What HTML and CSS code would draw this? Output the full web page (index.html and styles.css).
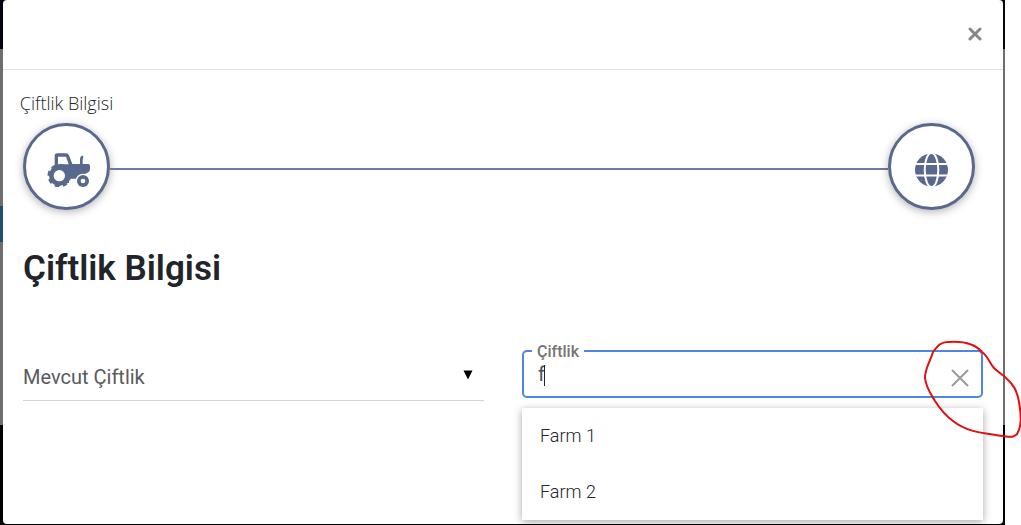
FILE: index.html
```html
<!DOCTYPE html>
<html lang="tr">
<head>
    <meta charset="UTF-8">
    <meta name="viewport" content="width=device-width, initial-scale=1.0">
    <title>Çiftlik Bilgisi</title>
    <link rel="stylesheet" href="styles.css">
</head>
<body>
    <div class="backdrop">
        <div class="modal" role="dialog" aria-labelledby="modalTitle">
            <div class="modal-header">
                <button type="button" class="close-btn" aria-label="Kapat">
                    <svg width="14" height="14" viewBox="0 0 14 14">
                        <path d="M2 2L12 12M12 2L2 12" />
                    </svg>
                </button>
            </div>

            <div class="modal-body">
                <div class="stepper">
                    <div class="step">
                        <span class="step-label">Çiftlik Bilgisi</span>
                        <button type="button" class="step-circle" aria-label="Çiftlik Bilgisi">
                            <!-- tractor -->
                            <svg width="50" height="35" viewBox="-15 0 150 105">
                                <path fill-rule="evenodd" d="M23 36V11Q23 4 31 4H57Q63 4 66 10L76 36H99V21Q99 13 105 11Q109 10 109 16L107 23V36H124Q129 36 129 42V51Q129 58 124 61Q117 66 111 67Q95 69 88 80H66V93H10V58L16 48H23ZM33 37H65L57 14H33Z" />
                                <circle cx="37" cy="71" r="31" />
                                <circle class="tread" cx="37" cy="71" r="32" />
                                <circle class="hole" cx="37" cy="71" r="17" />
                                <circle class="hole" cx="108" cy="87" r="22" />
                                <circle cx="108" cy="87" r="18" />
                                <circle class="hole" cx="108" cy="87" r="7" />
                            </svg>
                        </button>
                    </div>
                    <div class="step-line"></div>
                    <div class="step">
                        <button type="button" class="step-circle" aria-label="Konum">
                            <!-- globe -->
                            <svg width="34" height="34" viewBox="0 0 34 34">
                                <circle cx="16.5" cy="17" r="16.5" />
                                <path class="grid-line" d="M0 11H34M0 22.5H34" />
                                <ellipse class="grid-line" cx="16.5" cy="17" rx="6.8" ry="17" />
                            </svg>
                        </button>
                    </div>
                </div>

                <h1 id="modalTitle">Çiftlik Bilgisi</h1>

                <form class="form-row">
                    <div class="select-field">
                        <select class="select" aria-label="Mevcut Çiftlik">
                            <option>Mevcut Çiftlik</option>
                        </select>
                        <svg class="select-arrow" width="10" height="10" viewBox="0 0 10 10">
                            <path d="M0.5 0.5H9.5L5 9.5Z" />
                        </svg>
                    </div>

                    <div class="autocomplete">
                        <div class="text-field">
                            <label for="farm">Çiftlik</label>
                            <input type="text" id="farm" value="f" autocomplete="off">
                            <span class="caret"></span>
                            <button type="button" class="clear-btn" aria-label="Temizle">
                                <svg width="18" height="18" viewBox="0 0 18 18">
                                    <path d="M1 1L17 17M17 1L1 17" />
                                </svg>
                            </button>
                        </div>
                        <ul class="options">
                            <li>Farm 1</li>
                            <li>Farm 2</li>
                        </ul>
                    </div>
                </form>
            </div>
        </div>
    </div>

    <!-- hand-drawn marker around the clear button -->
    <svg class="marker" width="100" height="102" viewBox="0 0 100 102">
        <path d="M28 4C20 3 16 9 12 14C9 24 4 30 4 40C5 50 10 56 14 63C19 71 24 77 32 83C47 95 65 95 82 98C90 99 95 100 97 94C101 87 100 75 98 64C96 52 92 46 84 39C79 35 76 33 73 30C69 26 67 18 61 14C55 7 43 3 28 4" />
    </svg>
</body>
</html>
```

FILE: styles.css
```css
* {
    box-sizing: border-box;
}

body {
    margin: 0;
    background: #fff;
    color: #212529;
    font-family: Roboto, "Liberation Sans", sans-serif;
}

button {
    padding: 0;
    border: none;
    background: none;
    cursor: pointer;
}

.backdrop {
    display: flex;
    min-height: 100vh;
    margin-right: 16px;
    padding: 0 2px 1px 3px;
    background:
        linear-gradient(#1d4f70, #1d4f70) 0 206px / 3px 36px no-repeat,
        linear-gradient(#05050d 49px, #6e6e6e 49px, #6e6e6e 425px, #000 425px);
}

.modal {
    flex: 1;
    background: #fff;
    border-radius: 4px;
}

.modal-header {
    display: flex;
    justify-content: flex-end;
    align-items: center;
    height: 70px;
    padding: 0 21px 2px;
    border-bottom: 1px solid #dee2e6;
}

.close-btn {
    display: flex;
}

.close-btn path {
    stroke: #888;
    stroke-width: 3;
    stroke-linecap: round;
}

.modal-body {
    padding: 20px 20px 4px;
}

/* Stepper */
.stepper {
    display: flex;
    align-items: flex-end;
    margin-right: 8px;
}

.step {
    display: flex;
    flex-direction: column;
    align-items: center;
    width: 87px;
}

.step-label {
    margin-bottom: 6px;
    color: #212529;
    font-family: "Open Sans", "Noto Sans", sans-serif;
    font-size: 18px;
    font-weight: 300;
    line-height: 27px;
    white-space: nowrap;
}

.step-circle {
    display: flex;
    justify-content: center;
    align-items: center;
    width: 87px;
    height: 87px;
    padding-top: 6px;
    border: 3px solid #59698d;
    border-radius: 50%;
    background: #fff;
    box-shadow: 0 2px 8px rgba(0, 0, 0, 0.3);
}

.step-circle svg {
    fill: #59698d;
}

.step-circle .tread {
    fill: none;
    stroke: #59698d;
    stroke-width: 7;
    stroke-dasharray: 14 11;
}

.step-circle .hole {
    fill: #fff;
}

.step-circle .grid-line {
    fill: none;
    stroke: #fff;
    stroke-width: 2;
}

.step-line {
    flex: 1;
    height: 2px;
    margin-bottom: 40px;
    background: #7379a6;
}

h1 {
    margin: 36px 0 58px;
    font-size: 35px;
    font-weight: 600;
    line-height: 46px;
}

/* Form */
.form-row {
    display: grid;
    grid-template-columns: 1fr 1fr;
    gap: 38px;
}

.select-field {
    position: relative;
    height: 51px;
    border-bottom: 1px solid #ced4da;
}

.select {
    appearance: none;
    width: 100%;
    height: 54px;
    padding: 0;
    border: none;
    background: none;
    color: #5a5a60;
    font-family: inherit;
    font-size: 20px;
}

.select-arrow {
    position: absolute;
    top: 20px;
    right: 11px;
    pointer-events: none;
}

.text-field {
    position: relative;
    display: flex;
    align-items: center;
    height: 48px;
    padding: 0 12px 0 14px;
    border: 2px solid #4f86e4;
    border-radius: 5px;
}

.text-field label {
    position: absolute;
    top: -9px;
    left: 8px;
    padding: 0 5px;
    background: #fff;
    color: #757575;
    font-size: 16px;
    font-weight: 500;
    line-height: 18px;
}

.text-field input {
    flex: 1;
    min-width: 0;
    height: 44px;
    padding: 0;
    border: none;
    outline: none;
    background: none;
    color: #495057;
    font-family: inherit;
    font-size: 20px;
}

.caret {
    position: absolute;
    top: 13px;
    left: 20px;
    width: 1px;
    height: 21px;
    background: #222;
}

.clear-btn {
    display: flex;
    padding-top: 8px;
}

.clear-btn path {
    stroke: #9a9a9a;
    stroke-width: 2;
}

.options {
    margin: 10px 0 0;
    padding: 0;
    background: #fff;
    box-shadow: 0 2px 8px rgba(0, 0, 0, 0.35);
    list-style: none;
}

.options li {
    padding: 0 18px;
    color: #212529;
    font-size: 18px;
    font-weight: 300;
    line-height: 56px;
}

.marker {
    position: absolute;
    top: 338px;
    right: 0;
    pointer-events: none;
}

.marker path {
    fill: none;
    stroke: #e01010;
    stroke-width: 2;
}
```
